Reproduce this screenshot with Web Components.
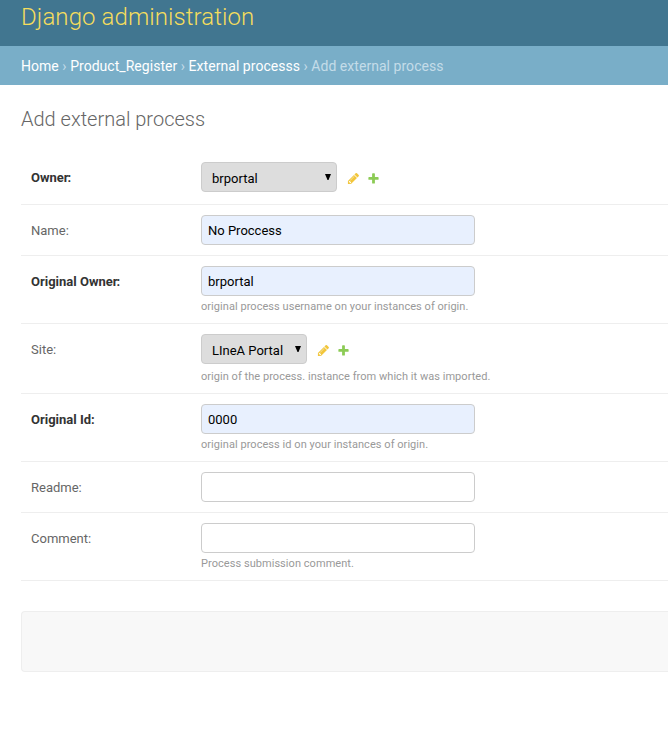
<!DOCTYPE html>
<html lang="en">
<head>
<meta charset="utf-8">
<title>Add external process</title>
<style>
html,body{margin:0;height:100%;overflow:hidden;background:#fff}
body{font:13px/normal Roboto,"Liberation Sans",sans-serif;color:#333}
</style>
</head>
<body>
<admin-page>
  <admin-header slot="header">Django administration</admin-header>
  <bread-crumbs slot="crumbs"></bread-crumbs>
  <span slot="title">Add external process</span>
  <form-row label="Owner:" required tall><select-box style="--w:136px">brportal</select-box><related-links></related-links></form-row>
  <form-row label="Name:"><text-box filled>No Proccess</text-box></form-row>
  <form-row label="Original Owner:" required help="original process username on your instances of origin."><text-box filled>brportal</text-box></form-row>
  <form-row label="Site:" help="origin of the process. instance from which it was imported." select-help><select-box style="--w:106px">LIneA Portal</select-box><related-links></related-links></form-row>
  <form-row label="Original Id:" required help="original process id on your instances of origin."><text-box filled>0000</text-box></form-row>
  <form-row label="Readme:"><text-box></text-box></form-row>
  <form-row label="Comment:" help="Process submission comment."><text-box></text-box></form-row>
  <submit-row></submit-row>
</admin-page>
<script>
function define(name, html) {
  customElements.define(name, class extends HTMLElement {
    constructor() {
      super();
      this.attachShadow({mode: "open"}).innerHTML = typeof html === "function" ? html(this) : html;
    }
  });
}
define("admin-header", `<style>
:host{display:flex;align-items:flex-start;height:46px;box-sizing:border-box;padding:3px 0 0 21px;background:#417690;color:#f5dd5d;font-size:24px;font-weight:300;line-height:28px;letter-spacing:.09px;white-space:nowrap}
</style><slot></slot>`);
define("bread-crumbs", `<style>
:host{display:block;height:39px;box-sizing:border-box;padding:12px 0 0 21px;background:#79aec8;color:#c4dce8;font-size:14px;line-height:16px;letter-spacing:.04px;white-space:nowrap}
a{color:#fff}
</style><a>Home</a> › <a>Product_Register</a> › <a>External processs</a> › Add external process`);
define("admin-page", `<style>
:host{display:block}
main{padding-left:21px}
h1{margin:0;padding-top:22px;height:45px;font-size:20px;font-weight:300;line-height:24px;color:#666}
</style><slot name="header"></slot><slot name="crumbs"></slot><main><h1><slot name="title"></slot></h1><slot></slot></main>`);
define("form-row", el => `<style>
:host{display:grid;grid-template-columns:170px 1fr;box-sizing:border-box;padding:10px 0 10px 10px;border-bottom:1px solid #eee}
:host([tall]){height:53px}
label{padding-top:8px;line-height:15px;color:#666}
:host([required]) label{font-weight:700;color:#333}
.kern{letter-spacing:-1.1px}
.control{display:flex;align-items:center;height:30px}
.help{height:12px;padding-top:5px;line-height:12px;font-size:11px;letter-spacing:.05px;color:#999;white-space:nowrap}
:host([select-help]) .help{padding-top:7px;letter-spacing:.04px}
</style><label>${el.getAttribute("label").replace("r:", '<span class="kern">r</span>:')}</label><div><div class="control"><slot></slot></div>${el.hasAttribute("help") ? `<div class="help">${el.getAttribute("help")}</div>` : ""}</div>`);
define("text-box", `<style>
:host{display:block;width:274px;height:30px;box-sizing:border-box;padding:1px 6px 0;border:1px solid #ccc;border-radius:4px;line-height:28px;color:#000;background:#fff}
:host([filled]){background:#e8f0fe}
</style><slot></slot>`);
define("select-box", `<style>
:host{display:flex;justify-content:space-between;align-items:center;width:var(--w);height:30px;box-sizing:border-box;padding:2px 5px 0 10px;border:1px solid #ccc;border-radius:4px;color:#000;background:#ddd;white-space:nowrap}
svg{width:6px;height:6px;margin-top:-2px}
</style><slot></slot><svg viewBox="0 0 6 6"><path d="M0 0H6L3.5 6H2.5Z"/></svg>`);
define("related-links", `<style>
:host{display:flex;gap:7px;padding:3px 0 0 10px}
svg{display:block;width:13px;height:13px;opacity:.8}
</style><svg viewBox="0 0 1792 1792"><path fill="#efb80b" d="M491 1536l91-91-235-235-91 91v107h128v128h107zm523-928q0-22-22-22-10 0-17 7l-542 542q-7 7-7 17 0 22 22 22 10 0 17-7l542-542q7-7 7-17zm-54-192l416 416-832 832h-416v-416zm683 96q0 53-37 90l-166 166-416-416 166-165q36-38 90-38 53 0 91 38l235 234q37 39 37 91z"/></svg><svg viewBox="0 0 1792 1792"><path fill="#70bf2b" d="M1600 796v192q0 40-28 68t-68 28h-416v416q0 40-28 68t-68 28h-192q-40 0-68-28t-28-68v-416h-416q-40 0-68-28t-28-68v-192q0-40 28-68t68-28h416v-416q0-40 28-68t68-28h192q40 0 68 28t28 68v416h416q40 0 68 28t28 68z"/></svg>`);
define("submit-row", `<style>
:host{display:block;height:61px;box-sizing:border-box;margin-top:30px;border:1px solid #eee;border-right:0;border-radius:4px 0 0 4px;background:#f8f8f8}
</style>`);
</script>
</body>
</html>
